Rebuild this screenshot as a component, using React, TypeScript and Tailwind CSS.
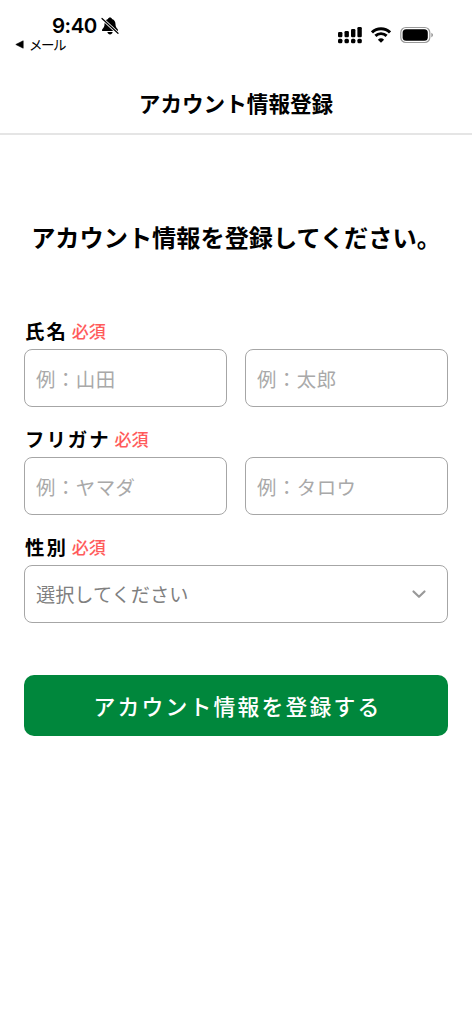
import type { ReactNode } from 'react'

const nameFields = [
  { label: '氏名', placeholders: ['例：山田', '例：太郎'] },
  { label: 'フリガナ', placeholders: ['例：ヤマダ', '例：タロウ'] },
]

function StatusBar() {
  return (
    <div className="flex h-[73px] justify-between">
      <div className="pl-[15px] pt-[14px]">
        <div className="flex items-center pl-[37px] font-['Inter','Noto_Sans_CJK_JP',sans-serif]">
          <span className="text-[20.5px] font-semibold leading-[24px] tracking-[-0.5px]">9:40</span>
          <svg className="ml-[4px] h-[18px] w-[18px]" viewBox="0 0 18 18">
            <path
              d="M9 .6c-1 0-1.700.6-2 1.400C4.600 2.900 3.500 4.900 3.500 7.200c0 2.300-.8 3.500-2 4.700-.9.900-.6 2.200.5 2.200h14c1.100 0 1.400-1.300.5-2.200-1.200-1.200-2-2.400-2-4.700 0-2.300-1.100-4.300-3.500-5.200C10.700 1.200 10 .6 9 .6Z"
              fill="#000"
            />
            <path d="M6.400 15h5.200c-.2 1.500-1.300 2.500-2.600 2.500S6.600 16.500 6.400 15Z" fill="#000" />
            <path d="M1 1.500 17 16.300" stroke="#fff" strokeWidth="3" />
            <path d="M1 1.500 17 16.300" stroke="#000" strokeWidth="1.200" strokeLinecap="round" />
          </svg>
        </div>
        <div className="flex items-center text-[13.5px] leading-[13px]">
          <svg className="mr-[5px] h-[9px] w-[9px]" viewBox="0 0 9 9">
            <path d="M8.200.8v7.400L.8 4.500Z" fill="#000" stroke="#000" strokeWidth=".6" strokeLinejoin="round" />
          </svg>
          <span className="tracking-[-1.5px]">メール</span>
        </div>
      </div>
      <div className="flex items-start pr-[38px] pt-[26px]">
        <svg className="mr-[9px] h-[18px] w-[24px]" viewBox="0 0 24 18">
          <rect x="0" y="6" width="4.400" height="5.200" rx="1.200" />
          <rect x="6.500" y="5" width="4.400" height="6.200" rx="1.200" />
          <rect x="13" y="3" width="4.400" height="8.200" rx="1.200" />
          <rect x="19.400" y="1" width="4.400" height="10.200" rx="1.200" />
          <rect x="0" y="12.800" width="4.400" height="4.400" rx="1.500" />
          <rect x="6.500" y="12.800" width="4.400" height="4.400" rx="1.500" />
          <rect x="13" y="12.800" width="4.400" height="4.400" rx="1.500" />
          <rect x="19.400" y="12.800" width="4.400" height="4.400" rx="1.500" />
        </svg>
        <svg className="mr-[9px] h-[18px] w-[20px]" viewBox="0 0 20 18" fill="none" stroke="#000">
          <path d="M1 6.400a12.800 12.800 0 0 1 18 0" strokeWidth="2.900" />
          <path d="M4.400 9.900a8 8 0 0 1 11.200 0" strokeWidth="2.900" />
          <path d="M10 16.800 6.900 13.700a4.500 4.500 0 0 1 6.200 0Z" fill="#000" stroke="none" />
        </svg>
        <svg className="h-[18px] w-[34px]" viewBox="0 0 34 18">
          <rect x=".8" y="1.500" width="29" height="15" rx="5" fill="none" stroke="#999" strokeWidth="1.200" />
          <rect x="2.600" y="3.300" width="25.200" height="11.400" rx="3.500" />
          <path d="M31.300 6.700c1 .4 1.700 1.300 1.700 2.300s-.7 1.900-1.700 2.300Z" fill="#999" />
        </svg>
      </div>
    </div>
  )
}

function FieldLabel({ children }: { children: ReactNode }) {
  return (
    <div className="mb-[5px] flex h-[26px] items-center pl-[1px]">
      <span className="text-[19.4px] font-bold tracking-[2px]">{children}</span>
      <span className="ml-[4px] text-[17px] font-medium text-[#ff5b5b]">必須</span>
    </div>
  )
}

export default function App() {
  return (
    <div className="min-h-[1024px] w-[472px] bg-white font-['Noto_Sans_CJK_JP',sans-serif] text-black">
      <StatusBar />
      <header className="flex h-[62px] items-center justify-center border-b-2 border-[#e5e5e5]">
        <h1 className="text-[21.6px] font-bold leading-none">アカウント情報登録</h1>
      </header>
      <main className="px-6">
        <h2 className="mt-[84px] flex h-[36px] items-center justify-center whitespace-nowrap text-[24.2px] font-bold">
          アカウント情報を登録してください。
        </h2>
        <form className="mt-[63px]">
          {nameFields.map((field) => (
            <div key={field.label} className="mb-[19px]">
              <FieldLabel>{field.label}</FieldLabel>
              <div className="grid grid-cols-2 gap-[18px]">
                {field.placeholders.map((placeholder) => (
                  <input
                    key={placeholder}
                    type="text"
                    placeholder={placeholder}
                    className="h-[58px] w-full rounded-[8px] border border-[#a6a6a6] px-[11px] text-[19.4px] tracking-[0.5px] placeholder:text-[#a9a9a9]"
                  />
                ))}
              </div>
            </div>
          ))}
          <FieldLabel>性別</FieldLabel>
          <button
            type="button"
            className="flex h-[58px] w-full items-center justify-between rounded-[8px] border border-[#a6a6a6] pl-[11px] pr-[20px] text-[19.2px] text-[#808080]"
          >
            選択してください
            <svg className="h-[16px] w-[16px]" viewBox="0 0 16 16" fill="none">
              <path d="m2.500 5.500 5.500 5.300 5.500-5.300" stroke="#999" strokeWidth="2.200" strokeLinecap="round" strokeLinejoin="round" />
            </svg>
          </button>
          <button
            type="button"
            className="mt-[52px] flex h-[61px] w-full items-center justify-center rounded-[10px] bg-[#00873c] pl-[3px] pt-[2px] text-[21.8px] font-medium tracking-[2.2px] text-white"
          >
            アカウント情報を登録する
          </button>
        </form>
      </main>
    </div>
  )
}
